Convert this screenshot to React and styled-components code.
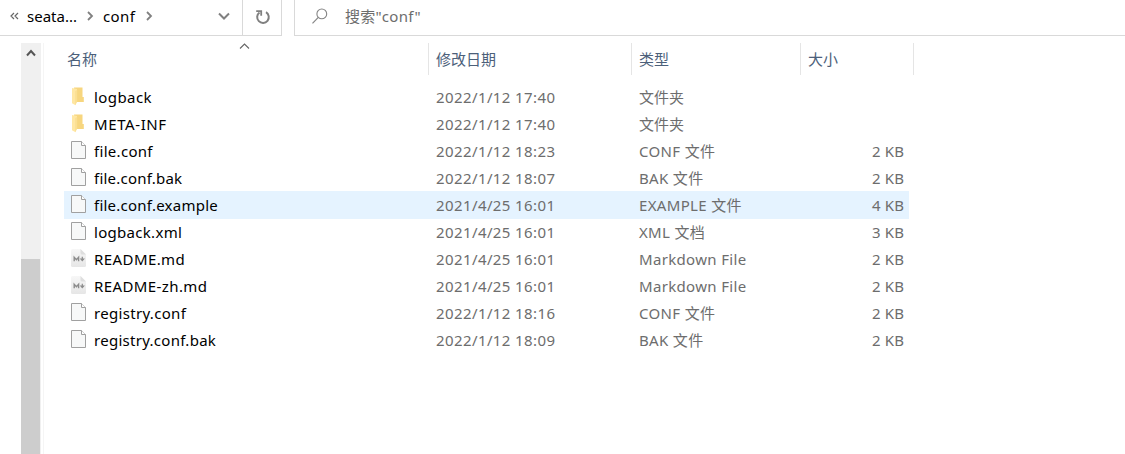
import React from "react";
import styled, { createGlobalStyle } from "styled-components";

const GlobalStyle = createGlobalStyle`
  * { box-sizing: border-box; }
  body {
    margin: 0;
    background: #fff;
    overflow: hidden;
    font-family: "Noto Sans", "Noto Sans CJK SC", sans-serif;
    font-size: 15px;
    color: #000;
  }
  svg { display: block; flex: none; }
`;

const Window = styled.div`
  width: 1125px;
  height: 454px;
  display: flex;
  flex-direction: column;
`;

const Toolbar = styled.header`
  display: flex;
  height: 36px;
  flex: none;
`;

const AddressBar = styled.div`
  display: flex;
  align-items: center;
  width: 243px;
  padding: 0 12px 3px 10px;
  border-right: 1px solid #d9d9d9;
  border-bottom: 1px solid #d9d9d9;
`;

const Crumb = styled.span`
  width: ${(p) => p.$width}px;
  margin-left: ${(p) => p.$gap}px;
  letter-spacing: ${(p) => p.$track || 0}px;
  line-height: 20px;
  white-space: nowrap;
`;

const Spacer = styled.div`
  flex: 1;
`;

const RefreshButton = styled.div`
  display: flex;
  align-items: center;
  justify-content: center;
  width: 39px;
  padding: 0 0 1px 2px;
  border-right: 1px solid #d9d9d9;
  border-bottom: 1px solid #d9d9d9;
`;

const SearchBox = styled.div`
  display: flex;
  align-items: center;
  flex: 1;
  gap: 17px;
  margin-left: 12px;
  padding: 0 0 3px 17px;
  border-left: 1px solid #d9d9d9;
  border-bottom: 1px solid #d9d9d9;
  color: #6d6d6d;
  letter-spacing: 0.25px;
  line-height: 20px;
`;

const Body = styled.main`
  display: flex;
  flex: 1;
  padding-top: 7px;
`;

const ScrollTrack = styled.div`
  display: flex;
  flex-direction: column;
  width: 20px;
  margin-left: 21px;
  background: #f0f0f0;
`;

const ScrollUp = styled.div`
  display: flex;
  justify-content: center;
  height: 216px;
  padding-top: 6px;
`;

const ScrollThumb = styled.div`
  flex: 1;
  width: 19px;
  background: #cdcdcd;
`;

const Listing = styled.section`
  flex: 1;
  margin-left: 2px;
  border-left: 1px solid #f5f5f5;
`;

const HeaderRow = styled.div`
  display: flex;
  height: 32px;
  margin-bottom: 8px;
`;

const HeaderCell = styled.div`
  position: relative;
  width: ${(p) => p.$width}px;
  padding: 6px 0 0 ${(p) => p.$indent || 7}px;
  border-right: 1px solid #e5e5e5;
  color: #4c607a;
  line-height: 20px;
`;

const SortMark = styled.div`
  position: absolute;
  top: 0;
  left: 195px;
`;

const Row = styled.div`
  display: flex;
  align-items: center;
  width: 845px;
  height: 28px;
  margin: 0 0 -1px 20px;
  background: ${(p) => (p.$hover ? "#e5f3ff" : "transparent")};
  color: #6d6d6d;
  line-height: 20px;
  white-space: nowrap;
`;

const IconCell = styled.div`
  width: 30px;
  padding: 0 0 2px 6px;
`;

const Name = styled.div`
  width: 342px;
  color: #000;
  letter-spacing: ${(p) => p.$track || 0}px;
`;

const Modified = styled.div`
  width: 203px;
  letter-spacing: 0.4px;
`;

const Kind = styled.div`
  width: 170px;
  letter-spacing: ${(p) => (p.$folder ? 0 : 0.33)}px;
`;

const Size = styled.div`
  width: 95px;
  letter-spacing: 0.1px;
  text-align: right;
`;

const Chevron = ({ w, h, d, color = "#666", stroke = 1.8 }) => (
  <svg width={w} height={h} viewBox={`0 0 ${w} ${h}`}>
    <path d={d} fill="none" stroke={color} strokeWidth={stroke} />
  </svg>
);

const FolderIcon = () => (
  <svg width="18" height="20" viewBox="0 0 18 20">
    <path d="M4 1.500h8.500v9.500h1.300v5H5z" fill="#f7d67f" />
    <path d="M2 2l5 1v12.600l-1.500 3.600L2 17.200z" fill="#ffe7a3" />
    <path d="M5.200 4.900l2-1v11.700l-2 3.500z" fill="#fbdf92" />
  </svg>
);

const FileIcon = () => (
  <svg width="18" height="20" viewBox="0 0 18 20">
    <path d="M1.500 1.500h10l4 4v13h-14z" fill="#f7f8f8" stroke="#a0a0a0" />
    <path d="M11.500 1.500v4h4" fill="#fff" stroke="#a0a0a0" />
  </svg>
);

const MarkdownIcon = () => (
  <svg width="18" height="20" viewBox="0 0 18 20">
    <defs>
      <linearGradient id="page" x1="0" y1="0" x2="0" y2="1">
        <stop offset="0" stopColor="#f7f7f7" />
        <stop offset="1" stopColor="#e6e6e6" />
      </linearGradient>
    </defs>
    <path d="M2.500 1H10.500l5.500 5.500V17.500q0 1.500-1.500 1.500h-12Q1 19 1 17.500V2.500Q1 1 2.500 1z" fill="url(#page)" />
    <path d="M10.500 1v4q0 1.500 1.500 1.500H16z" fill="#dedede" />
    <path d="M4.200 13.200V9.200l2.200 2.400 2.200-2.400v4" fill="none" stroke="#8c8c8c" strokeWidth="1.400" />
    <path d="M12.300 8.700v3M11 11.200l1.300 1.500 1.300-1.500z" fill="#8c8c8c" stroke="#8c8c8c" strokeWidth="1.200" />
  </svg>
);

const icons = { folder: FolderIcon, file: FileIcon, markdown: MarkdownIcon };

const files = [
  { icon: "folder", name: "logback", date: "2022/1/12 17:40", kind: "文件夹", track: 0.42 },
  { icon: "folder", name: "META-INF", date: "2022/1/12 17:40", kind: "文件夹", track: 0.6 },
  { icon: "file", name: "file.conf", date: "2022/1/12 18:23", kind: "CONF 文件", size: "2 KB", track: 0.3 },
  { icon: "file", name: "file.conf.bak", date: "2022/1/12 18:07", kind: "BAK 文件", size: "2 KB", track: 0.22 },
  { icon: "file", name: "file.conf.example", date: "2021/4/25 16:01", kind: "EXAMPLE 文件", size: "4 KB", hover: true, track: 0.24 },
  { icon: "file", name: "logback.xml", date: "2021/4/25 16:01", kind: "XML 文档", size: "3 KB", track: 0.3 },
  { icon: "markdown", name: "README.md", date: "2021/4/25 16:01", kind: "Markdown File", size: "2 KB", track: 0.42 },
  { icon: "markdown", name: "README-zh.md", date: "2021/4/25 16:01", kind: "Markdown File", size: "2 KB", track: 0.4 },
  { icon: "file", name: "registry.conf", date: "2022/1/12 18:16", kind: "CONF 文件", size: "2 KB", track: 0.32 },
  { icon: "file", name: "registry.conf.bak", date: "2022/1/12 18:09", kind: "BAK 文件", size: "2 KB", track: 0.28 },
];

export default function App() {
  return (
    <>
      <GlobalStyle />
      <Window>
        <Toolbar>
          <AddressBar>
            <Chevron w={9} h={8} d="M4 1L1 4l3 3M8 1L5 4l3 3" stroke={1.2} />
            <Crumb $width={51} $gap={8}>seata...</Crumb>
            <Chevron w={24} h={10} d="M10 1l4 4-4 4" color="#808080" />
            <Crumb $width={34} $gap={1} $track={0.4}>conf</Crumb>
            <Chevron w={24} h={10} d="M10 1l4 4-4 4" color="#808080" />
            <Spacer />
            <Chevron w={12} h={8} d="M1 1.500l5 5 5-5" color="#808080" stroke={2} />
          </AddressBar>
          <RefreshButton>
            <svg width="16" height="16" viewBox="0 0 16 16">
              <path d="M11 3.200A5.800 5.800 0 1 1 4.500 3.500" fill="none" stroke="#808080" strokeWidth="2" />
              <path d="M1.200 2.200h5v4.500" fill="none" stroke="#808080" strokeWidth="1.800" />
            </svg>
          </RefreshButton>
          <SearchBox>
            <svg width="16" height="16" viewBox="0 0 16 16">
              <circle cx="9.800" cy="5.900" r="4.900" fill="none" stroke="#858585" strokeWidth="1.100" />
              <path d="M6.300 9.400L.5 15.300" stroke="#858585" strokeWidth="1.200" />
            </svg>
            <span>搜索"conf"</span>
          </SearchBox>
        </Toolbar>
        <Body>
          <ScrollTrack>
            <ScrollUp>
              <Chevron w={10} h={8} d="M1 6.500l4-4.500 4 4.500" color="#555" stroke={2} />
            </ScrollUp>
            <ScrollThumb />
          </ScrollTrack>
          <Listing>
            <HeaderRow>
              <HeaderCell $width={385} $indent={23}>
                名称
                <SortMark>
                  <Chevron w={11} h={6} d="M1 5.500L5.500 1 10 5.500" stroke={1.100} />
                </SortMark>
              </HeaderCell>
              <HeaderCell $width={203}>修改日期</HeaderCell>
              <HeaderCell $width={169}>类型</HeaderCell>
              <HeaderCell $width={113}>大小</HeaderCell>
            </HeaderRow>
            {files.map((f) => {
              const Icon = icons[f.icon];
              return (
                <Row key={f.name} $hover={f.hover}>
                  <IconCell>
                    <Icon />
                  </IconCell>
                  <Name $track={f.track}>{f.name}</Name>
                  <Modified>{f.date}</Modified>
                  <Kind $folder={f.icon === "folder"}>{f.kind}</Kind>
                  <Size>{f.size}</Size>
                </Row>
              );
            })}
          </Listing>
        </Body>
      </Window>
    </>
  );
}
